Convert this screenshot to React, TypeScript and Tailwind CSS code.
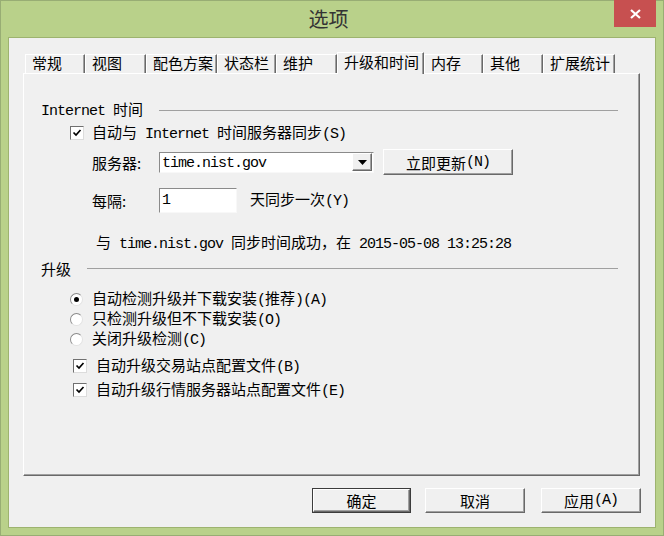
import React from 'react';

const CJK = "font-['Noto_Sans_CJK_SC',sans-serif]";

// latin runs in the dialog use a courier-like half-width face
function M({ children }: { children: React.ReactNode }) {
  return (
    <span className="whitespace-pre font-['Liberation_Mono',monospace] text-[15px] tracking-[-1px]">{children}</span>
  );
}

function CheckBox({ checked }: { checked?: boolean }) {
  return (
    <span className="flex h-[14px] w-[14px] shrink-0 items-center justify-center border border-[#dcdcdc] border-l-[#707070] border-t-[#707070] bg-white">
      {checked && (
        <svg width="10" height="10" viewBox="0 0 10 10">
          <polyline points="1.5,4.5 4,7 8.5,2" fill="none" stroke="#000" strokeWidth="1.7" />
        </svg>
      )}
    </span>
  );
}

function Radio({ checked }: { checked?: boolean }) {
  return (
    <span className="flex h-[13px] w-[13px] shrink-0 items-center justify-center rounded-full border border-[#e2e2e2] border-l-[#8a8a8a] border-t-[#8a8a8a] bg-white">
      {checked && <span className="h-[5px] w-[5px] rounded-full bg-black" />}
    </span>
  );
}

function Button({ children, width, isDefault }: { children: React.ReactNode; width: string; isDefault?: boolean }) {
  return (
    <div className={`${width} h-[25px] ${isDefault ? 'border border-[#3c3c3c]' : ''}`}>
      <div className="flex h-full w-full items-center justify-center border border-white border-b-[#696969] border-r-[#696969] bg-[#f0f0f0] text-[15px] leading-none text-black shadow-[inset_-1px_-1px_0_#a0a0a0]">
        {children}
      </div>
    </div>
  );
}

function GroupHeader({ children }: { children: React.ReactNode }) {
  return (
    <div className="flex h-[20px] items-center gap-4 pl-[17px] pr-[21px]">
      <span className="leading-none">{children}</span>
      <div className="h-0 flex-1 border-t border-[#a0a0a0]" />
    </div>
  );
}

const tabs = [
  { label: '常规', w: 'w-[60px]' },
  { label: '视图', w: 'w-[61px]' },
  { label: '配色方案', w: 'w-[71px]' },
  { label: '状态栏', w: 'w-[59px]' },
  { label: '维护', w: 'w-[61px]' },
  { label: '升级和时间', w: 'w-[87px]', active: true },
  { label: '内存', w: 'w-[59px]' },
  { label: '其他', w: 'w-[60px]' },
  { label: '扩展统计', w: 'w-[72px]' },
];

export default function App() {
  return (
    <div className={`flex h-[536px] w-[664px] flex-col border border-[#98ad74] bg-[#b9d18a] ${CJK}`}>
      {/* Title bar */}
      <div className="flex h-[36px] items-start">
        <div className="flex-1" />
        <div className="pt-[5px] text-[20px] leading-[26px] text-[#333]">选项</div>
        <div className="flex flex-1 justify-end pr-[7px]">
          <div className="-mt-px flex h-[27px] w-[42px] items-center justify-center bg-[#c75050]">
            <svg width="11" height="10" viewBox="0 0 11 10">
              <path d="M1 1 L10 9 M10 1 L1 9" stroke="#fff" strokeWidth="2.2" />
            </svg>
          </div>
        </div>
      </div>

      {/* Client area */}
      <div className="mx-[7px] mb-[7px] flex flex-1 flex-col border border-[#9db36f] bg-[#f0f0f0] text-[15px] text-black">
        {/* Tabs */}
        <div className="relative z-10 ml-[14px] mt-[14px] flex h-[21px] items-end pl-[2px]">
          {tabs.map((t) =>
            t.active ? (
              <div
                key={t.label}
                className={`${t.w} relative -mb-px flex h-[22px] items-start border-l border-r border-t border-l-white border-r-[#696969] border-t-white bg-[#f0f0f0] pl-[6px] leading-[17px] shadow-[inset_-1px_0_0_#a0a0a0]`}
              >
                {t.label}
              </div>
            ) : (
              <div
                key={t.label}
                className={`${t.w} flex h-[19px] items-start border-l border-r border-t border-l-white border-r-[#696969] border-t-white pl-[6px] leading-[16px] shadow-[inset_-1px_0_0_#a0a0a0]`}
              >
                {t.label}
              </div>
            ),
          )}
        </div>

        {/* Panel */}
        <div className="ml-[14px] mr-[15px] flex h-[403px] flex-col border border-white border-b-[#696969] border-r-[#696969] shadow-[inset_-1px_-1px_0_#a0a0a0]">
          <div className="mt-[26px]">
            <GroupHeader>
              <M>Internet </M>时间
            </GroupHeader>
          </div>

          <div className="mt-[3px] flex h-[20px] items-center gap-[8px] pl-[46px] leading-none">
            <CheckBox checked />
            <span>
              自动与<M> Internet </M>时间服务器同步<M>(S)</M>
            </span>
          </div>

          <div className="mt-[6px] flex h-[26px] items-center pl-[68px] leading-none">
            <span className="w-[67px]">服务器:</span>
            <div className="flex h-[21px] w-[215px] items-center border border-[#f8f8f8] border-l-[#8a8a8a] border-t-[#8a8a8a] bg-white pl-[2px]">
              <span className="flex-1">
                <M>time.nist.gov</M>
              </span>
              <div className="mr-px flex h-[18px] w-[20px] items-center justify-center border border-white border-b-[#696969] border-r-[#696969] bg-[#f0f0f0] shadow-[inset_-1px_-1px_0_#a0a0a0]">
                <svg width="9" height="5" viewBox="0 0 9 5">
                  <path d="M0 0 H9 L4.5 5 Z" fill="#000" />
                </svg>
              </div>
            </div>
            <div className="ml-[9px]">
              <div className="flex h-[26px] w-[130px] items-center justify-center border border-white border-b-[#696969] border-r-[#696969] shadow-[inset_-1px_-1px_0_#a0a0a0]">
                立即更新<M>(N)</M>
              </div>
            </div>
          </div>

          <div className="mt-[12px] flex h-[26px] items-center pl-[68px] leading-none">
            <span className="w-[67px]">每隔:</span>
            <div className="flex h-[25px] w-[78px] items-center border border-[#f8f8f8] border-l-[#8a8a8a] border-t-[#8a8a8a] bg-white pl-[2px]">
              <M>1</M>
            </div>
            <span className="ml-[13px]">
              天同步一次<M>(Y)</M>
            </span>
          </div>

          <div className="mt-[20px] flex h-[20px] items-center pl-[72px] leading-none">
            <span>
              与<M> time.nist.gov </M>同步时间成功，在<M> 2015-05-08 13:25:28</M>
            </span>
          </div>

          <div className="mt-[5px]">
            <GroupHeader>升级</GroupHeader>
          </div>

          <div className="mt-[11px] flex flex-col">
            <div className="flex h-[20px] items-center gap-[9px] pl-[46px] leading-none">
              <Radio checked />
              <span>
                自动检测升级并下载安装<M>(</M>推荐<M>)(A)</M>
              </span>
            </div>
            <div className="flex h-[20px] items-center gap-[9px] pl-[46px] leading-none">
              <Radio />
              <span>
                只检测升级但不下载安装<M>(O)</M>
              </span>
            </div>
            <div className="flex h-[20px] items-center gap-[9px] pl-[46px] leading-none">
              <Radio />
              <span>
                关闭升级检测<M>(C)</M>
              </span>
            </div>
          </div>

          <div className="mt-[7px] flex h-[20px] items-center gap-[9px] pl-[49px] leading-none">
            <CheckBox checked />
            <span>
              自动升级交易站点配置文件<M>(B)</M>
            </span>
          </div>
          <div className="mt-[4px] flex h-[20px] items-center gap-[9px] pl-[49px] leading-none">
            <CheckBox checked />
            <span>
              自动升级行情服务器站点配置文件<M>(E)</M>
            </span>
          </div>
        </div>

        {/* Dialog buttons */}
        <div className="mt-[12px] flex justify-end pr-[14px]">
          <Button width="w-[99px]" isDefault>
            确定
          </Button>
          <div className="ml-[14px]">
            <Button width="w-[100px]">取消</Button>
          </div>
          <div className="ml-[16px]">
            <Button width="w-[100px]">
              应用<M>(A)</M>
            </Button>
          </div>
        </div>
      </div>
    </div>
  );
}
